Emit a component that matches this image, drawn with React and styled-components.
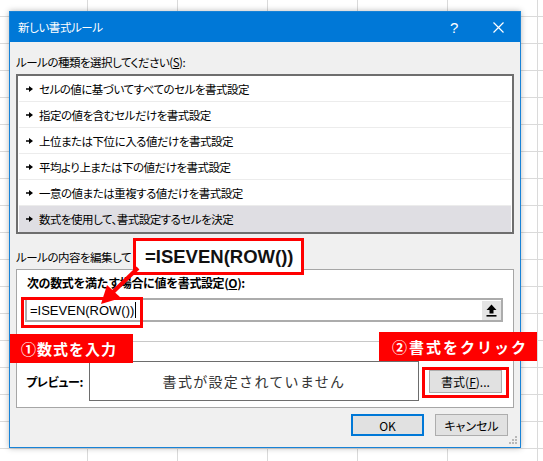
import React from 'react';
import styled, { createGlobalStyle } from 'styled-components';

const GlobalStyle = createGlobalStyle`
  html, body { margin: 0; padding: 0; background: #fff; }
  body { font-family: "Noto Sans CJK JP", "Noto Sans", sans-serif; color: #000; }
  * { box-sizing: border-box; }
`;

const GRID = '#dadada';
const RED = '#ff0000';

const Page = styled.div`
  position: relative;
  width: 543px;
  height: 461px;
  overflow: hidden;
  padding: 11px 0 0 9px;
  background-color: #fff;
  background-image:
    linear-gradient(to right, ${GRID} 1px, transparent 1px),
    linear-gradient(to bottom, ${GRID} 1px, transparent 1px);
  background-size: 90px 27px;
  background-position: 87px 16px;
`;

const Dialog = styled.div`
  position: relative;
  width: 512px;
  height: 437px;
  border: 1px solid #1883d7;
  background: #f0f0f0;
  box-shadow: 0 0 6px rgba(0, 0, 0, 0.28);
  display: flex;
  flex-direction: column;
`;

const TitleBar = styled.div`
  height: 30px;
  background: #0078d7;
  color: #fff;
  display: flex;
  align-items: center;
  padding-left: 8px;
  font-size: 11.5px;
  letter-spacing: -0.4px;
  font-feature-settings: "palt";
`;

const TitleText = styled.span`
  flex: 1;
`;

const TitleBtn = styled.div`
  width: 44px;
  height: 30px;
  display: flex;
  align-items: center;
  justify-content: center;
  font-family: "Liberation Sans", sans-serif;
  font-size: 15px;
`;

const Body = styled.div`
  flex: 1;
  display: flex;
  flex-direction: column;
  padding: 0 6px;
`;

const SectionLabel = styled.div`
  margin-top: ${p => p.$top}px;
  line-height: 16px;
  font-size: 11.5px;
  letter-spacing: -0.5px;
  font-feature-settings: "palt";
  white-space: nowrap;
`;

const U = styled.span`
  text-decoration: underline;
  font-feature-settings: normal;
`;

const List = styled.div`
  margin-top: 4px;
  height: 160px;
  border: 2px solid #6e6e6e;
  background: #fff;
  padding: 0 1px;
  display: flex;
  flex-direction: column;
`;

const Row = styled.div`
  height: 26px;
  flex: none;
  display: flex;
  align-items: center;
  gap: 6px;
  padding-left: 7px;
  font-size: 11.5px;
  letter-spacing: -0.5px;
  font-feature-settings: "palt";
  border-bottom: 1px solid ${p => (p.$last ? 'transparent' : '#ececec')};
  background: ${p => (p.$selected ? '#dfdee3' : 'transparent')};
`;

const Group = styled.div`
  margin-top: 4px;
  height: 139px;
  border: 1px solid #a6a6a6;
  background: #fff;
  display: flex;
  flex-direction: column;
  padding-top: 5px;
`;

const GroupLabel = styled.div`
  margin-left: 10px;
  line-height: 16px;
  font-size: 12px;
  letter-spacing: -0.4px;
  font-weight: 700;
  white-space: nowrap;
`;

const FormulaInput = styled.div`
  margin: 7px 0 0 8px;
  width: 478px;
  height: 24px;
  border: 2px solid #acacac;
  display: flex;
  align-items: center;
  padding-left: 3px;
`;

const FormulaText = styled.span`
  font-family: "Liberation Sans", Arial, sans-serif;
  font-size: 13px;
`;

const Caret = styled.span`
  width: 1px;
  height: 16px;
  background: #000;
  margin-left: 1px;
`;

const Spacer = styled.div`
  flex: 1;
`;

const RefButton = styled.div`
  width: 19px;
  height: 19px;
  background: #e4e4e4;
  display: flex;
  align-items: center;
  justify-content: center;
`;

const Separator = styled.div`
  margin-top: 19px;
  height: 1px;
  background: #c8c8c8;
`;

const PreviewRow = styled.div`
  margin-top: 19px;
  display: flex;
  align-items: center;
  padding-left: 9px;
`;

const PreviewLabel = styled.div`
  width: 63px;
  font-size: 12px;
  font-weight: 700;
  letter-spacing: -0.3px;
  font-feature-settings: "palt";
`;

const PreviewBox = styled.div`
  width: 330px;
  height: 40px;
  border: 1px solid #6d6d6d;
  display: flex;
  align-items: center;
  justify-content: center;
  font-size: 14px;
  letter-spacing: 1.3px;
  color: #333;
`;

const Button = styled.div`
  width: 73px;
  height: ${p => p.$h || 22}px;
  margin-left: ${p => p.$ml || 0}px;
  background: #e1e1e1;
  border: ${p => (p.$primary ? '2px solid #0078d7' : '1px solid #adadad')};
  display: flex;
  align-items: center;
  justify-content: center;
  font-size: 12px;
  font-feature-settings: "palt";
`;

const Footer = styled.div`
  margin-top: 6px;
  display: flex;
  justify-content: flex-end;
  gap: 11px;
  padding-right: 6px;
`;

const Grip = styled.svg`
  position: absolute;
  right: 2px;
  bottom: 2px;
`;

const Overlay = styled.svg`
  position: absolute;
  left: 0;
  top: 0;
  pointer-events: none;
`;

const Callout = styled.div`
  position: absolute;
  left: 133px;
  top: 238px;
  width: 171px;
  height: 37px;
  border: 3px solid ${RED};
  background: #fff;
  display: flex;
  align-items: center;
  padding-left: 9px;
  font-family: "Liberation Sans", Arial, sans-serif;
  font-weight: 700;
  font-size: 18.5px;
  color: #111;
`;

const Highlight = styled.div`
  position: absolute;
  left: ${p => p.$x}px;
  top: ${p => p.$y}px;
  width: ${p => p.$w}px;
  height: ${p => p.$h}px;
  border: 3px solid ${RED};
`;

const Tag = styled.div`
  position: absolute;
  left: ${p => p.$x}px;
  top: ${p => p.$y}px;
  width: ${p => p.$w}px;
  height: 29px;
  background: ${RED};
  color: #fff;
  display: flex;
  align-items: center;
  padding-left: ${p => p.$pl}px;
  font-size: 15px;
  font-weight: 700;
  letter-spacing: ${p => p.$ls}px;
  white-space: nowrap;
`;

const ItemArrow = () => (
  <svg width="7" height="6" viewBox="0 0 7 6">
    <polygon points="0,2.3 3,2.3 3,0 7,3 3,6 3,3.7 0,3.7" fill="#000" />
  </svg>
);

const items = [
  'セルの値に基づいてすべてのセルを書式設定',
  '指定の値を含むセルだけを書式設定',
  '上位または下位に入る値だけを書式設定',
  '平均より上または下の値だけを書式設定',
  '一意の値または重複する値だけを書式設定',
  '数式を使用して、書式設定するセルを決定',
];

export default function App() {
  return (
    <>
      <GlobalStyle />
      <Page>
        <Dialog>
          <TitleBar>
            <TitleText>新しい書式ルール</TitleText>
            <TitleBtn>?</TitleBtn>
            <TitleBtn>
              <svg width="11" height="11" viewBox="0 0 11 11">
                <path d="M0.5 0.5 L10.5 10.5 M10.5 0.5 L0.5 10.5" stroke="#fff" strokeWidth="1.2" />
              </svg>
            </TitleBtn>
          </TitleBar>
          <Body>
            <SectionLabel $top={12}>
              ルールの種類を選択してください(<U>S</U>):
            </SectionLabel>
            <List>
              {items.map((t, i) => (
                <Row key={t} $selected={i === 5} $last={i === 5}>
                  <ItemArrow />
                  <span>{t}</span>
                </Row>
              ))}
            </List>
            <SectionLabel $top={15}>ルールの内容を編集して</SectionLabel>
            <Group>
              <GroupLabel>
                次の数式を満たす場合に値を書式設定(<U>O</U>):
              </GroupLabel>
              <FormulaInput>
                <FormulaText>=ISEVEN(ROW())</FormulaText>
                <Caret />
                <Spacer />
                <RefButton>
                  <svg width="11" height="13" viewBox="0 0 11 13">
                    <path d="M5.5 0.5 L10.5 6 H7.5 V9.5 H3.5 V6 H0.5 Z" fill="#000" />
                    <rect x="0.5" y="11" width="10" height="1.6" fill="#000" />
                  </svg>
                </RefButton>
              </FormulaInput>
              <Separator />
              <PreviewRow>
                <PreviewLabel>プレビュー:</PreviewLabel>
                <PreviewBox>書式が設定されていません</PreviewBox>
                <Button $ml={10} $h={23}>
                  書式(<U>F</U>)...
                </Button>
              </PreviewRow>
            </Group>
            <Footer>
              <Button $primary>OK</Button>
              <Button>キャンセル</Button>
            </Footer>
          </Body>
          <Grip width="9" height="9" viewBox="0 0 9 9">
            <rect x="6" y="0" width="2" height="2" fill="#b8b8b8" />
            <rect x="3" y="3" width="2" height="2" fill="#b8b8b8" />
            <rect x="6" y="3" width="2" height="2" fill="#b8b8b8" />
            <rect x="0" y="6" width="2" height="2" fill="#b8b8b8" />
            <rect x="3" y="6" width="2" height="2" fill="#b8b8b8" />
            <rect x="6" y="6" width="2" height="2" fill="#b8b8b8" />
          </Grip>
        </Dialog>

        <Highlight $x={21} $y={297} $w={122} $h={31} />
        <Highlight $x={422} $y={367} $w={87} $h={31} />
        <Callout>=ISEVEN(ROW())</Callout>
        <Overlay width="543" height="461" viewBox="0 0 543 461">
          <line x1="138" y1="268" x2="112" y2="293" stroke={RED} strokeWidth="4" />
          <polygon points="101,304 107,285 121,298" fill={RED} />
        </Overlay>
        <Tag $x={10} $y={334} $w={123} $pl={11} $ls={1}>①数式を入力</Tag>
        <Tag $x={379} $y={332} $w={158} $pl={13} $ls={2}>②書式をクリック</Tag>
      </Page>
    </>
  );
}
